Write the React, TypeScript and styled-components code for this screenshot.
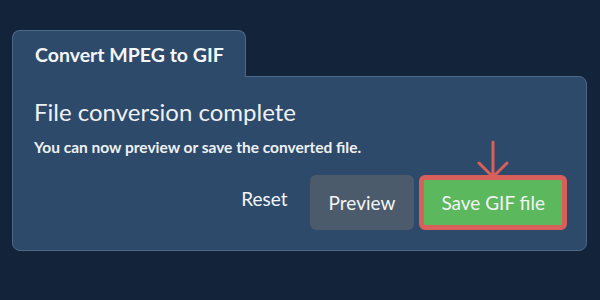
import React from "react";
import styled, { createGlobalStyle } from "styled-components";

const Global = createGlobalStyle`
  html, body {
    margin: 0;
    padding: 0;
    background: #12233a;
  }
  body {
    font-family: Lato, "Open Sans", sans-serif;
    color: #eef1f4;
  }
`;

const Page = styled.div`
  width: 600px;
  height: 300px;
  box-sizing: border-box;
  padding: 30px 13px 0 12px;
  background: #12233a;
`;

const Card = styled.div`
  display: flex;
  flex-direction: column;
  align-items: flex-start;
`;

const Tab = styled.div`
  position: relative;
  z-index: 1;
  box-sizing: border-box;
  width: 234px;
  height: 47px;
  margin-bottom: -1px;
  padding: 0 0 0 22px;
  display: flex;
  align-items: center;
  background: #2d4a6a;
  border: 1px solid #4d6989;
  border-bottom: none;
  border-radius: 8px 8px 0 0;
  font-size: 19.5px;
  font-weight: 700;
  color: #f4f6f8;
`;

const Panel = styled.div`
  box-sizing: border-box;
  width: 100%;
  height: 175px;
  padding: 21px 19px 20px 21px;
  display: flex;
  flex-direction: column;
  background: #2d4a6a;
  border: 1px solid #4d6989;
  border-radius: 0 8px 8px 8px;
`;

const Heading = styled.h2`
  margin: 0;
  font-size: 24px;
  font-weight: 400;
  line-height: 1.2;
  color: #eef1f4;
`;

const Message = styled.p`
  margin: 11px 0 0;
  font-size: 15.5px;
  font-weight: 700;
  line-height: 1.2;
  color: #eef1f4;
`;

const Actions = styled.div`
  margin-top: auto;
  display: flex;
  justify-content: flex-end;
  align-items: center;
  gap: 5px;
`;

const Button = styled.button<{ $variant: "text" | "secondary" | "primary" }>`
  position: relative;
  box-sizing: border-box;
  height: 55px;
  font-family: Lato, "Open Sans", sans-serif;
  font-size: 19px;
  font-weight: 400;
  color: #f2f4f6;
  cursor: pointer;
  border-radius: 6px;
  padding: ${(p) => (p.$variant === "primary" ? "0 17px" : "0 19px")};
  background: ${(p) =>
    p.$variant === "primary" ? "#5cb85c" : p.$variant === "secondary" ? "#4b5b6c" : "transparent"};
  border: ${(p) => (p.$variant === "primary" ? "5px solid #d9605a" : "none")};
  ${(p) => (p.$variant === "text" ? "padding: 0 17px 8px;" : "")}
`;

const Arrow = styled.svg`
  position: absolute;
  left: 50%;
  bottom: 100%;
  margin-left: -16px;
  margin-bottom: 1px;
  overflow: visible;
`;

export default function App() {
  return (
    <>
      <Global />
      <Page>
        <Card>
          <Tab>Convert MPEG to GIF</Tab>
          <Panel>
            <Heading>File conversion complete</Heading>
            <Message>You can now preview or save the converted file.</Message>
            <Actions>
              <Button $variant="text">Reset</Button>
              <Button $variant="secondary">Preview</Button>
              <Button $variant="primary">
                Save GIF file
                <Arrow width="32" height="39" viewBox="0 0 32 39" aria-hidden="true">
                  <path
                    d="M16 2 V37 M2 23 L16 37 L30 23"
                    fill="none"
                    stroke="#d9605a"
                    strokeWidth="3"
                    strokeLinecap="round"
                    strokeLinejoin="round"
                  />
                </Arrow>
              </Button>
            </Actions>
          </Panel>
        </Card>
      </Page>
    </>
  );
}
